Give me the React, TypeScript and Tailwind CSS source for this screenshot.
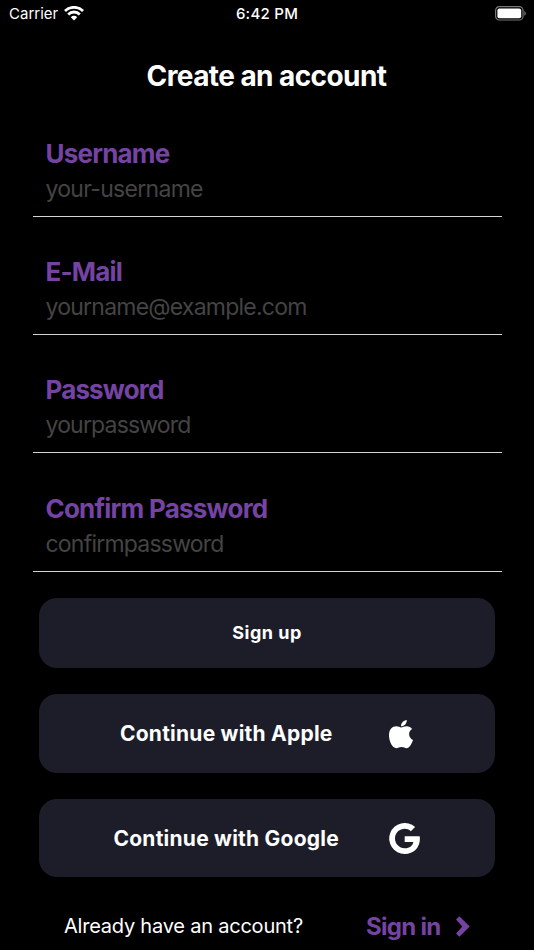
import type { ReactNode } from "react"

const fields = [
  { label: "Username", placeholder: "your-username", type: "text", labelSpacing: "tracking-[-0.8px]", inputSpacing: "placeholder:tracking-[-0.7px]" },
  { label: "E-Mail", placeholder: "yourname@example.com", type: "email", labelSpacing: "tracking-[-0.8px]", inputSpacing: "placeholder:tracking-[-0.77px]" },
  { label: "Password", placeholder: "yourpassword", type: "text", labelSpacing: "tracking-[-0.85px]", inputSpacing: "placeholder:tracking-[-0.83px]" },
  { label: "Confirm Password", placeholder: "confirmpassword", type: "text", labelSpacing: "tracking-[-0.78px]", inputSpacing: "placeholder:tracking-[-0.78px]" },
]

function WifiIcon(): ReactNode {
  return (
    <svg className="-mt-0.5" width="20" height="15" viewBox="0 0 20 15" fill="none" stroke="white" strokeWidth="2.8">
      <path d="M1 5a12.8 12.8 0 0 1 18 0" />
      <path d="M4.2 8.4a8.2 8.2 0 0 1 11.6 0" />
      <path d="M6.8 11.2a4.5 4.5 0 0 1 6.4 0L10 14.4z" fill="white" stroke="none" />
    </svg>
  )
}

function BatteryIcon(): ReactNode {
  return (
    <svg className="-mt-0.5" width="32" height="15" viewBox="0 0 32 15">
      <rect x="0.6" y="0.6" width="27.4" height="13.4" rx="3.8" fill="none" stroke="#777" strokeWidth="1.2" />
      <rect x="2.4" y="2.4" width="23.8" height="9.8" rx="2" fill="white" />
      <path d="M29.3 4.9c2 .8 2 4 0 4.8z" fill="#777" />
    </svg>
  )
}

function AppleIcon(): ReactNode {
  return (
    <svg className="mt-0.5" width="24" height="29" viewBox="0 0 24 29" fill="white">
      <path d="M12.2 7.4c1.3 0 3-1.1 5.6-1.1 1.9 0 4 .9 5.3 2.6-2 1.2-3 3-3 5.1 0 2.7 1.5 4.9 3.9 5.9-1.3 3.6-3.5 8.3-6.5 8.3-1.9 0-2.5-1.1-5-1.1s-3.2 1.1-5 1.1C3.3 28.2 0 21.3 0 15.3 0 9.3 3.4 6.3 7.2 6.3c2.3 0 3.7 1.1 5 1.1z" />
      <path d="M12 6.3C11.8 3.1 14.6.4 17.8 0 18.1 3.3 15.2 6.3 12 6.3z" />
    </svg>
  )
}

function GoogleIcon(): ReactNode {
  return (
    <svg className="-mt-0.5" width="31" height="31" viewBox="0 0 31 31" fill="white">
      <path d="M15.7 13.3h14.9c.2.9.3 1.6.3 2.5C30.9 24.6 24.8 31 15.7 31A15.5 15.5 0 1 1 26.1 4l-4.3 4.2C16.2 2.9 6 6.9 6 15.5c0 5.3 4.3 9.7 9.7 9.7 5.2 0 8-3 8.7-6.3h-8.7z" />
    </svg>
  )
}

function ChevronIcon(): ReactNode {
  return (
    <svg className="-mt-px" width="14" height="21" viewBox="0 0 14 21" fill="currentColor" stroke="currentColor" strokeWidth="1.5" strokeLinejoin="round">
      <path d="M3.3 1.2L12.7 10.5L3.3 19.8L1 17.5L7.3 10.5L1 3.5z" />
    </svg>
  )
}

export default function App(): ReactNode {
  return (
    <main className="h-[950px] w-[534px] overflow-hidden bg-black font-['Inter',sans-serif] text-white">
      <header className="flex h-7 items-center pr-[7px] pl-[9px] text-[15px] leading-7">
        <div className="flex flex-1 items-center gap-1.5"><span>Carrier</span><WifiIcon /></div>
        <span className="mr-0.5 font-medium tracking-[0.25px]">6:42 PM</span>
        <div className="flex flex-1 justify-end"><BatteryIcon /></div>
      </header>
      <h1 className="mt-7 pr-px text-center text-[28px] leading-10 font-bold tracking-[-0.58px]">Create an account</h1>
      <form className="mt-[30.9px]">
        {fields.map((field) => (
          <label key={field.label} className="mx-[32.5px] mb-[28.25px] block h-[90px] border-b border-[#d4d4d4] px-[13px] pt-[11px]">
            <span className={`block text-[26px] leading-[31px] font-bold text-[#7544a3] ${field.labelSpacing}`}>{field.label}</span>
            <input type={field.type} placeholder={field.placeholder} className={`mt-[4.3px] block h-8 w-full text-[23px] outline-none placeholder:text-[#444] ${field.inputSpacing}`} />
          </label>
        ))}
        <div className="mx-[39px] -mt-0.5 flex flex-col gap-[26px]">
          <button type="button" className="h-[70.5px] rounded-[18px] bg-[#1c1d29] text-lg font-bold tracking-[0.5px]">Sign up</button>
          <button type="button" className="flex h-[78.5px] items-center rounded-[18px] bg-[#1c1d29] pl-[81px] text-[21px] font-bold tracking-[0.23px]"><span className="w-[269px] text-left">Continue with Apple</span><AppleIcon /></button>
          <button type="button" className="flex h-[78.5px] items-center rounded-[18px] bg-[#1c1d29] pt-0.5 pl-[74.5px] text-[21px] font-bold tracking-[0.23px]"><span className="w-[275px] text-left">Continue with Google</span><GoogleIcon /></button>
        </div>
      </form>
      <footer className="mt-8 flex items-center pl-16">
        <span className="w-[302px] text-xl tracking-[-0.22px]">Already have an account?</span>
        <a href="#signin" className="flex items-center gap-[15px] pt-0.5 text-2xl font-bold tracking-[-0.7px] text-[#7544a3]">Sign in<ChevronIcon /></a>
      </footer>
    </main>
  )
}
